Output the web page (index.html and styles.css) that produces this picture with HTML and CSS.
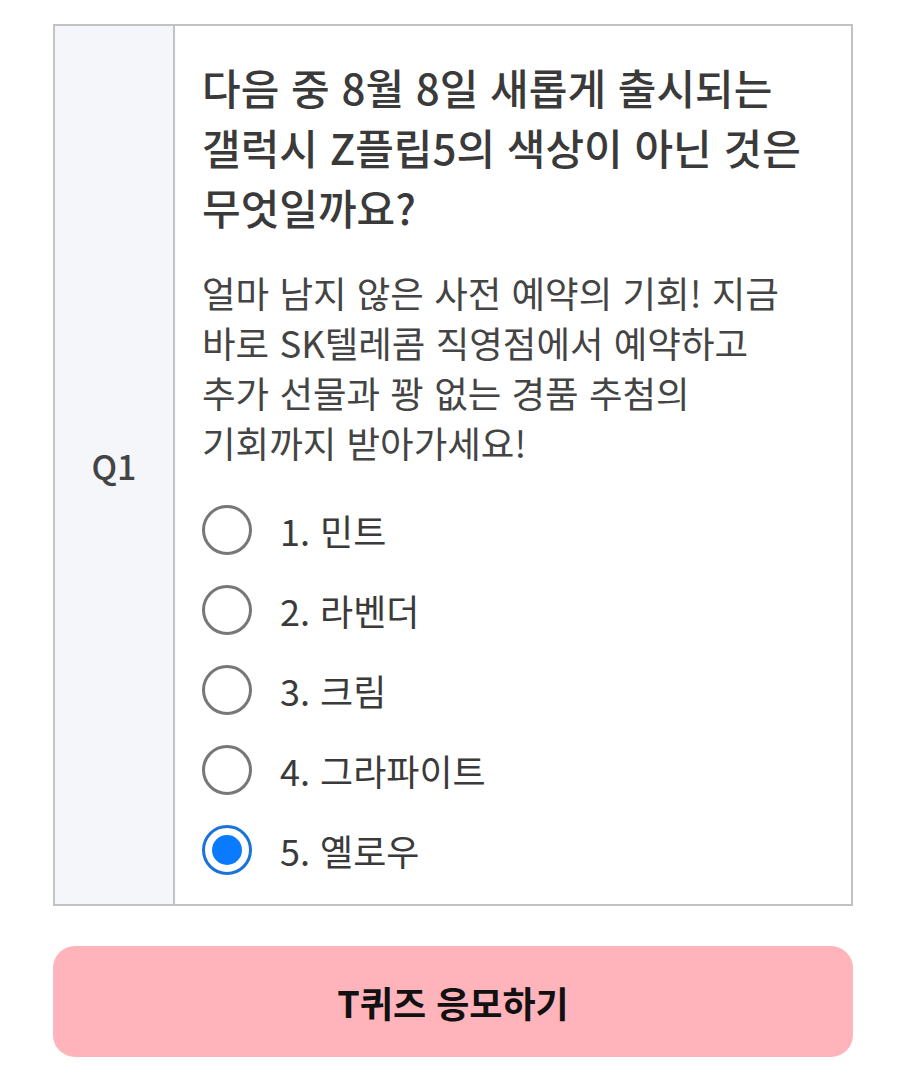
FILE: index.html
```html
<!DOCTYPE html>
<html lang="ko">
<head>
    <meta charset="UTF-8">
    <meta name="viewport" content="width=device-width, initial-scale=1.0">
    <title>T퀴즈</title>
    <link rel="stylesheet" href="styles.css">
</head>
<body>
    <div class="container">
        <div class="quiz">
            <div class="quiz-num">Q1</div>
            <div class="quiz-body">
                <h2 class="question">다음 중 8월 8일 새롭게 출시되는<br>갤럭시 Z플립5의 색상이 아닌 것은<br>무엇일까요?</h2>
                <p class="desc">얼마 남지 않은 사전 예약의 기회! 지금<br>바로 SK텔레콤 직영점에서 예약하고<br>추가 선물과 꽝 없는 경품 추첨의<br>기회까지 받아가세요!</p>
                <ul class="options">
                    <li class="option"><span class="radio"></span>1. 민트</li>
                    <li class="option"><span class="radio"></span>2. 라벤더</li>
                    <li class="option"><span class="radio"></span>3. 크림</li>
                    <li class="option"><span class="radio"></span>4. 그라파이트</li>
                    <li class="option"><span class="radio checked"></span>5. 옐로우</li>
                </ul>
            </div>
        </div>
        <button class="btn">T퀴즈 응모하기</button>
    </div>
</body>
</html>
```

FILE: styles.css
```css
body {
    font-family: "Noto Sans CJK KR", "Noto Sans", sans-serif;
    margin: 0;
    padding: 0;
    background-color: #fff;
    color: #333;
}
.container {
    padding: 24px 51px 0 53px;
}
.quiz {
    display: flex;
    border: 2px solid #c2c2c2;
}
.quiz-num {
    width: 118px;
    flex-shrink: 0;
    background-color: #f5f6fa;
    border-right: 2px solid #c2c2c2;
    display: flex;
    align-items: center;
    justify-content: center;
    font-size: 34px;
    font-weight: 500;
    color: #444;
}
.quiz-body {
    flex: 1;
    padding: 31px 10px 14px 27px;
}
.question {
    margin: 0;
    font-size: 42px;
    font-weight: 500;
    line-height: 60px;
    color: #3a3a3a;
}
.desc {
    margin: 31px 0 0;
    font-size: 36.5px;
    line-height: 50px;
    color: #444;
}
.options {
    list-style: none;
    margin: 22px 0 0;
    padding: 0;
}
.option {
    display: flex;
    align-items: center;
    height: 80px;
    font-size: 36px;
    color: #3a3a3a;
}
.radio {
    width: 44px;
    height: 44px;
    border: 3px solid #777;
    border-radius: 50%;
    margin-right: 28px;
    flex-shrink: 0;
    display: flex;
    align-items: center;
    justify-content: center;
}
.radio.checked {
    border-color: #1a73d9;
}
.radio.checked::after {
    content: "";
    width: 30px;
    height: 30px;
    border-radius: 50%;
    background-color: #0a7bff;
}
.btn {
    display: block;
    width: 100%;
    height: 111px;
    margin-top: 40px;
    border: none;
    border-radius: 22px;
    background-color: #ffb3ba;
    font-family: inherit;
    font-size: 36px;
    font-weight: 700;
    color: #111;
    cursor: pointer;
}
```
